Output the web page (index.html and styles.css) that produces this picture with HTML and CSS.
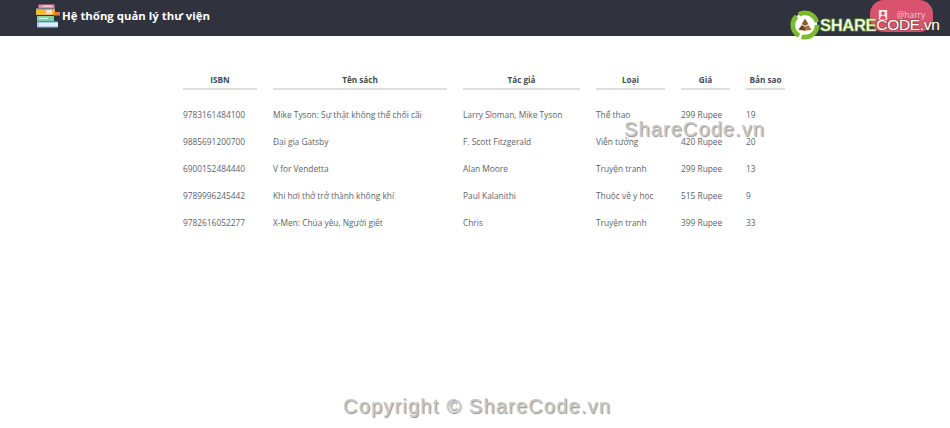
FILE: index.html
```html
<!DOCTYPE html>
<html lang="en">
<head>
    <meta charset="UTF-8">
    <meta name="viewport" content="width=device-width, initial-scale=1.0">
    <title>Hệ thống quản lý thư viện</title>
    <link rel="stylesheet" href="styles.css">
</head>
<body>
<!-- Top bar -->
<div class="navbar">
    <div class="brand">
        <svg class="brand-icon" viewBox="0 0 24 24" width="24" height="24">
            <rect x="2.500" y="0.500" width="16" height="3.500" rx="0.500" fill="#e98aa0"/>
            <rect x="7" y="1.300" width="9" height="1.600" fill="#f6c6d0"/>
            <rect x="0" y="4.500" width="19" height="6.500" rx="0.500" fill="#f2b93b"/>
            <rect x="10" y="5.500" width="6" height="4.500" fill="#e8e4d4"/>
            <rect x="0" y="4.500" width="19" height="1" fill="#5b8fd0"/>
            <rect x="18" y="8" width="6" height="3.500" fill="#d9803a"/>
            <rect x="1" y="12" width="17" height="5" rx="0.500" fill="#7fd0a8"/>
            <rect x="3" y="13.800" width="9" height="1.200" fill="#d8f3e4"/>
            <rect x="1" y="17.500" width="21" height="6" rx="0.500" fill="#a9c8f0"/>
            <rect x="3" y="19" width="19" height="3" fill="#e6f0fb"/>
        </svg>
        <span class="brand-title">Hệ thống quản lý thư viện</span>
    </div>
    <div class="user-button">
        <svg class="user-icon" viewBox="0 0 12 14" width="10" height="12">
            <path d="M1 1h10v12H1z" fill="#f7e3e8"/>
            <circle cx="6" cy="5" r="2.200" fill="#d9536f"/>
            <path d="M2.500 12c0-3 1.500-4 3.500-4s3.500 1 3.500 4z" fill="#d9536f"/>
        </svg>
        <span>@harry</span>
    </div>
</div>

<!-- Book list -->
<div class="content">
    <table class="book-table">
        <thead>
            <tr>
                <th class="col-isbn">ISBN</th>
                <th class="col-name">Tên sách</th>
                <th class="col-author">Tác giả</th>
                <th class="col-genre">Loại</th>
                <th class="col-price">Giá</th>
                <th class="col-copies">Bản sao</th>
            </tr>
        </thead>
        <tbody>
            <tr><td>9783161484100</td><td>Mike Tyson: Sự thật không thể chối cãi</td><td>Larry Sloman, Mike Tyson</td><td>Thể thao</td><td>299 Rupee</td><td>19</td></tr>
            <tr><td>9885691200700</td><td>Đại gia Gatsby</td><td>F. Scott Fitzgerald</td><td>Viễn tưởng</td><td>420 Rupee</td><td>20</td></tr>
            <tr><td>6900152484440</td><td>V for Vendetta</td><td>Alan Moore</td><td>Truyện tranh</td><td>299 Rupee</td><td>13</td></tr>
            <tr><td>9789996245442</td><td>Khi hơi thở trở thành không khí</td><td>Paul Kalanithi</td><td>Thuộc về y học</td><td>515 Rupee</td><td>9</td></tr>
            <tr><td>9782616052277</td><td>X-Men: Chúa yêu, Người giết</td><td>Chris</td><td>Truyện tranh</td><td>399 Rupee</td><td>33</td></tr>
        </tbody>
    </table>
</div>

<!-- Watermarks -->
<div class="logo">
    <svg class="logo-mark" viewBox="0 0 32 32" width="30" height="30">
        <circle cx="16" cy="16" r="13" fill="#fff" stroke="#7dbb2e" stroke-width="5" stroke-dasharray="24 3"/>
        <circle cx="16" cy="16" r="8" fill="#fff"/>
        <path d="M16 9l3.500 6-3.500 2-3.500-2z" fill="#8a5a2b"/>
        <path d="M9 21l3.500-5 3.500 2v4z" fill="#6b4420"/>
        <path d="M23 21l-3.500-5-3.500 2v4z" fill="#a8702f"/>
    </svg>
    <span class="logo-share">SHARE</span><span class="logo-code">CODE.vn</span>
</div>
<div class="mark mark-middle">ShareCode.vn</div>
<div class="mark mark-bottom">Copyright © ShareCode.vn</div>
</body>
</html>
```

FILE: styles.css
```css
body {
    margin: 0;
    height: 428px;
    overflow: hidden;
    background-color: white;
    font-family: "Open Sans", Arial, sans-serif;
    position: relative;
}
.navbar {
    height: 36px;
    background-color: #30323e;
    display: flex;
    justify-content: space-between;
    padding: 0 17px 0 36px;
}
.brand {
    display: flex;
    align-items: center;
    gap: 2px;
    height: 31px;
}
.brand-title {
    color: white;
    font-size: 11.400px;
    font-weight: 700;
}
.user-button {
    width: 63px;
    height: 32px;
    box-sizing: border-box;
    padding-bottom: 3px;
    background-color: #d9536f;
    border-radius: 14px;
    display: flex;
    align-items: center;
    justify-content: center;
    gap: 9px;
    color: #f2c4cf;
    font-size: 8.400px;
}
.content {
    padding-top: 34px;
    padding-left: 167px;
}
.book-table {
    border-collapse: separate;
    border-spacing: 16px 0;
    table-layout: fixed;
    font-size: 8.350px;
    color: #5c636a;
}
.book-table th {
    color: #454b52;
    font-size: 8.200px;
    font-weight: 700;
    text-align: center;
    height: 18px;
    padding: 0;
    border-bottom: 2px solid #dedede;
}
.book-table td {
    height: 27px;
    padding: 0;
    white-space: nowrap;
}
.book-table tbody tr:first-child td {
    padding-top: 11px;
}
.col-isbn { width: 74px; }
.col-name { width: 174px; }
.col-author { width: 117px; }
.col-genre { width: 69px; }
.col-price { width: 49px; }
.col-copies { width: 39px; }
.logo {
    position: absolute;
    left: 790px;
    top: 10px;
    display: flex;
    align-items: center;
    font-family: "Liberation Sans", Arial, sans-serif;
    letter-spacing: -0.3px;
}
.logo-share {
    color: white;
    font-size: 16.500px;
    font-weight: 700;
    -webkit-text-stroke: 0.5px #7dbb2e;
    text-shadow: 0 0 2px #5f9a1f;
}
.logo-code {
    color: white;
    font-size: 15.500px;
    text-shadow: 0 0 2px #6b4420, 0 0 1px #6b4420;
}
.mark {
    position: absolute;
    font-family: "Liberation Sans", Arial, sans-serif;
    font-size: 20px;
    color: #c8c8c8;
    text-shadow: 1px 1px 1px #8d8d8d;
    white-space: nowrap;
}
.mark-middle {
    left: 624px;
    top: 118px;
    letter-spacing: 1.100px;
}
.mark-bottom {
    left: 343px;
    top: 395px;
    letter-spacing: 1.200px;
}
```
